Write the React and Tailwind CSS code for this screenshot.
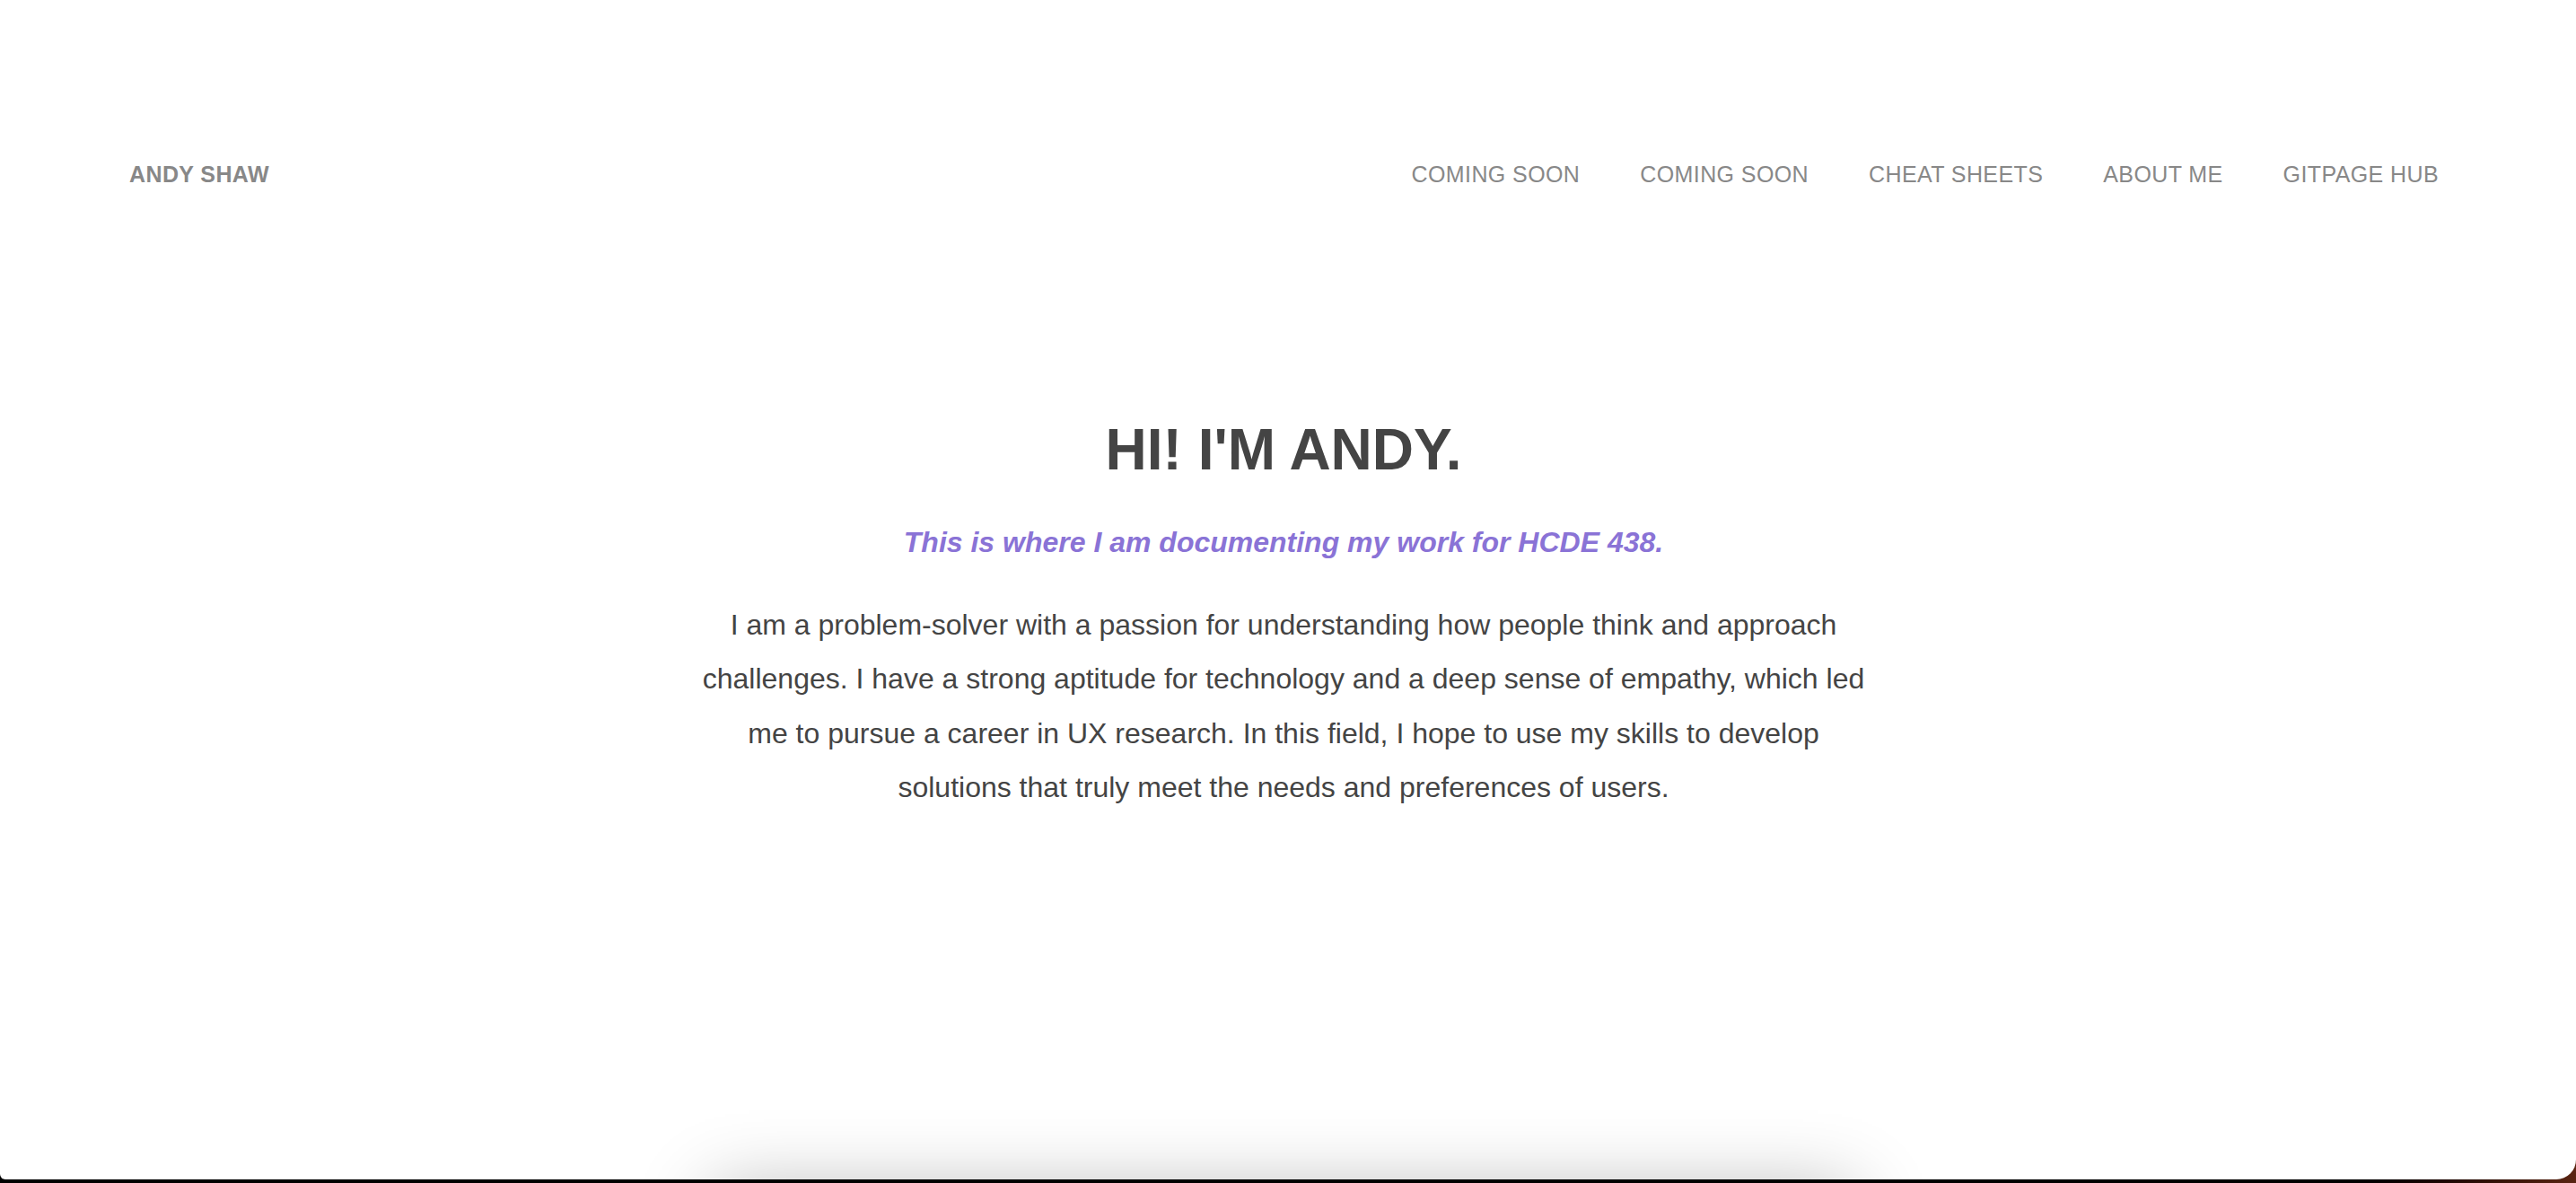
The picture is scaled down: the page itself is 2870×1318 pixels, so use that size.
const navLinks = ['COMING SOON', 'COMING SOON', 'CHEAT SHEETS', 'ABOUT ME', 'GITPAGE HUB'];

export default function App() {
    return (
        <div className="h-[1318px] w-full bg-gradient-to-r from-black via-black via-90% to-[#5a2412] font-['Liberation_Sans',Arial,sans-serif]">
            <div className="h-[1314px] overflow-hidden rounded-br-[22px] rounded-bl-[6px] bg-white">
                {/* top bar */}
                <header className="mt-[172px] flex h-[46px] items-center justify-between pl-[144px] pr-[153px]">
                    <a className="text-[25px] font-bold tracking-[0.4px] text-[#888]">ANDY SHAW</a>
                    <nav className="flex items-center gap-[67px]">
                        {navLinks.map((label, i) => (
                            <a key={i} className="text-[25px] tracking-[0.4px] text-[#888]">
                                {label}
                            </a>
                        ))}
                    </nav>
                </header>

                {/* intro */}
                <main className="flex flex-col items-center pr-[10px] text-center">
                    <h1 className="mt-[251px] text-[64px] leading-none font-bold text-[#444]">HI! I'M ANDY.</h1>
                    <p className="mt-[55px] text-[32px] leading-none font-bold italic text-[#8a73d6]">
                        This is where I am documenting my work for HCDE 438.
                    </p>
                    <p className="mt-[46px] w-[1300px] text-[32px] leading-[60.4px] text-[#444]">
                        I am a problem-solver with a passion for understanding how people think and approach
                        challenges. I have a strong aptitude for technology and a deep sense of empathy, which led
                        me to pursue a career in UX research. In this field, I hope to use my skills to develop
                        solutions that truly meet the needs and preferences of users.
                    </p>
                    <div className="mt-[420px] h-[400px] w-[1270px] shrink-0 bg-white shadow-[0_0_80px_rgba(0,0,0,0.3)]"></div>
                </main>
            </div>
        </div>
    );
}
